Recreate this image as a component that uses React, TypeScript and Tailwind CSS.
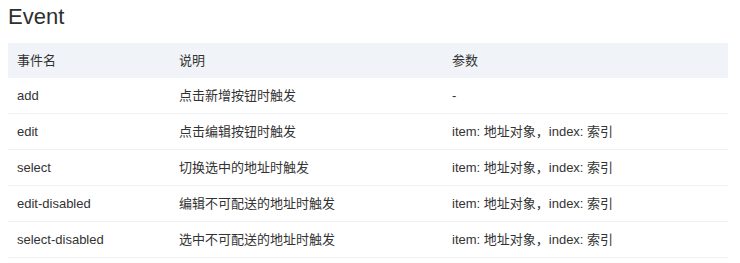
const rows = [
  { name: 'add', desc: '点击新增按钮时触发', params: '-' },
  { name: 'edit', desc: '点击编辑按钮时触发', params: 'item: 地址对象，index: 索引' },
  { name: 'select', desc: '切换选中的地址时触发', params: 'item: 地址对象，index: 索引' },
  { name: 'edit-disabled', desc: '编辑不可配送的地址时触发', params: 'item: 地址对象，index: 索引' },
  { name: 'select-disabled', desc: '选中不可配送的地址时触发', params: 'item: 地址对象，index: 索引' },
]

function Row({ cells, head }: { cells: string[]; head?: boolean }) {
  return (
    <div
      className={
        head
          ? 'flex h-[35px] items-center bg-[#f0f3f8]'
          : 'flex h-[36px] items-center border-b border-[#eef0f3]'
      }
    >
      <div className="w-[162px] px-[9px]">{cells[0]}</div>
      <div className="w-[273px] px-[9px]">{cells[1]}</div>
      <div className="flex-1 px-[9px]">{cells[2]}</div>
    </div>
  )
}

export default function App() {
  return (
    <div className="w-[740px] h-[263px] bg-white px-[8px] pt-[4px] text-[#333] font-['Liberation_Sans','Noto_Sans_CJK_SC',sans-serif]">
      <h2 className="text-[22px] leading-[26px] text-[#2f2f2f]">Event</h2>
      <div className="mt-[13px] w-[720px] text-[13px] leading-[18px]">
        <Row head cells={['事件名', '说明', '参数']} />
        {rows.map((r) => (
          <Row key={r.name} cells={[r.name, r.desc, r.params]} />
        ))}
      </div>
    </div>
  )
}
